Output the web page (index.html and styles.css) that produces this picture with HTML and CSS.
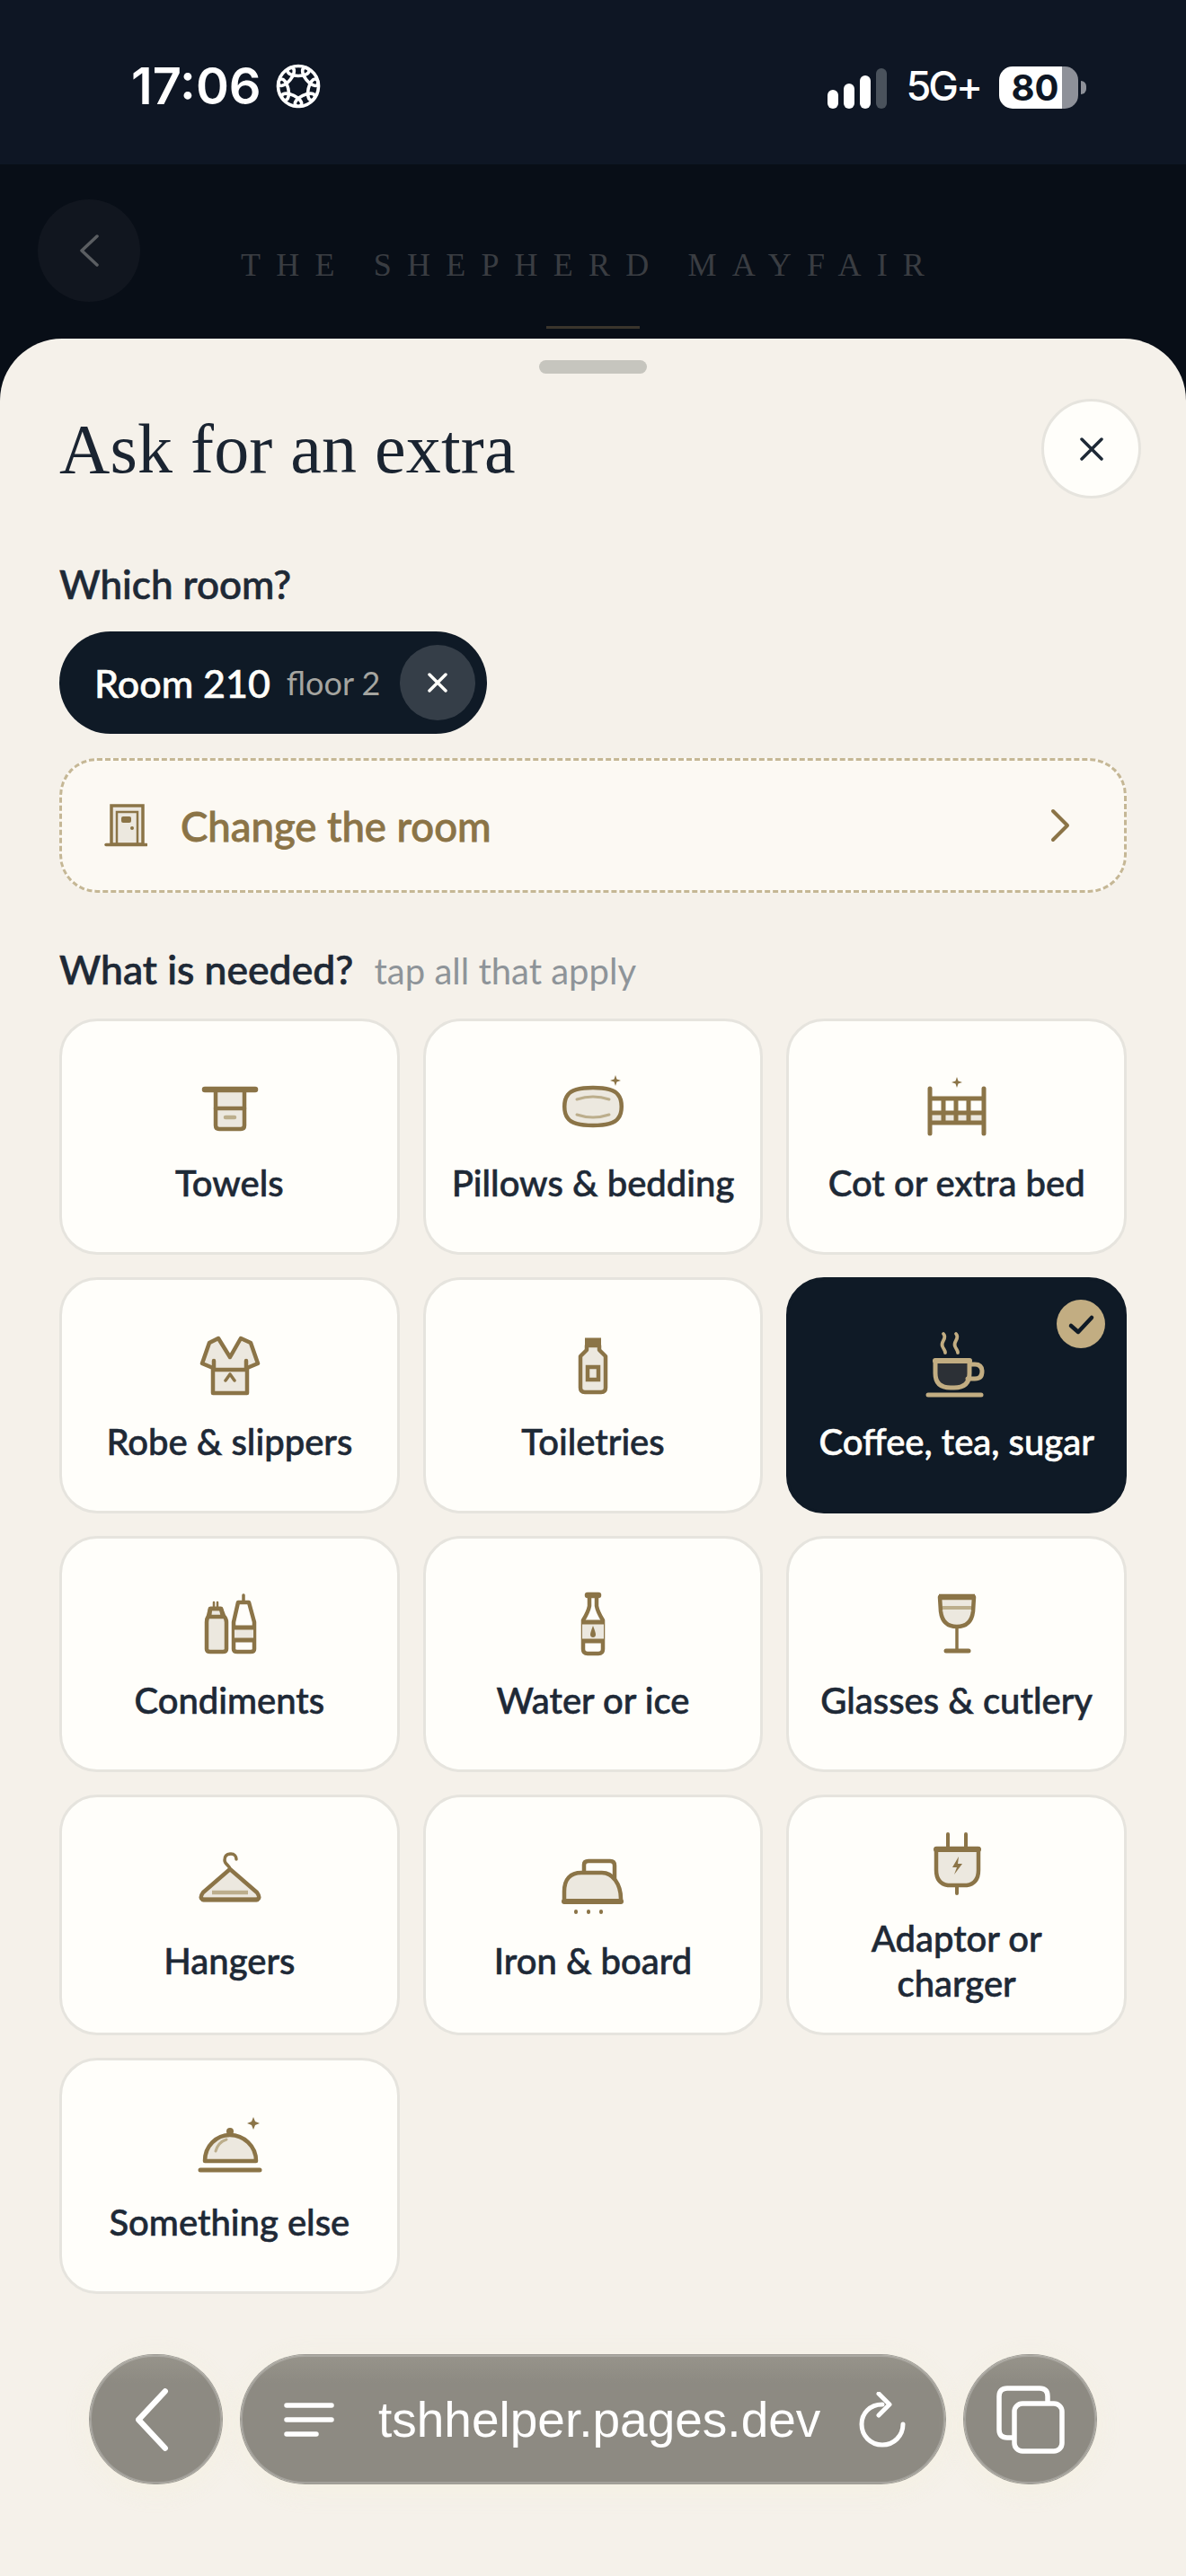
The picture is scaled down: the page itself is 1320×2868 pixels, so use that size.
FILE: index.html
```html
<!DOCTYPE html>
<html lang="en">
  <head>
    <meta charset="UTF-8" />
    <meta name="viewport" content="width=device-width, initial-scale=1.0" />
    <title>Ask for an extra</title>
    <link rel="stylesheet" href="styles.css">
  </head>
  <body>
    <div class="phone">
      <div class="status">
        <div class="status-left">
          <span class="clock">17:06</span>
          <svg class="focus" viewBox="0 0 50 50" fill="none" stroke="#fff" stroke-width="3.600">
            <ellipse cx="25" cy="8" rx="12" ry="5.500"/>
            <ellipse cx="25" cy="8" rx="12" ry="5.500" transform="rotate(51.430 25 25)"/>
            <ellipse cx="25" cy="8" rx="12" ry="5.500" transform="rotate(102.860 25 25)"/>
            <ellipse cx="25" cy="8" rx="12" ry="5.500" transform="rotate(154.290 25 25)"/>
            <ellipse cx="25" cy="8" rx="12" ry="5.500" transform="rotate(205.710 25 25)"/>
            <ellipse cx="25" cy="8" rx="12" ry="5.500" transform="rotate(257.140 25 25)"/>
            <ellipse cx="25" cy="8" rx="12" ry="5.500" transform="rotate(308.570 25 25)"/>
          </svg>
        </div>
        <div class="status-right">
          <div class="signal">
            <i class="bar bar-1"></i>
            <i class="bar bar-2"></i>
            <i class="bar bar-3"></i>
            <i class="bar bar-4"></i>
          </div>
          <span class="net">5G+</span>
          <div class="battery"><span>80</span></div>
          <i class="battery-nub"></i>
        </div>
      </div>

      <header class="topbar">
        <button class="topbar-back">
          <svg viewBox="0 0 24 36" fill="none" stroke="#5b5e62" stroke-width="3.500" stroke-linecap="round" stroke-linejoin="round"><path d="M21 2 L4 18 L21 34"/></svg>
        </button>
        <span class="hotel">THE SHEPHERD MAYFAIR</span>
        <i class="topbar-rule"></i>
      </header>

      <main class="sheet">
        <div class="handle"></div>
        <div class="sheet-head">
          <h1>Ask for an extra</h1>
          <button class="close">
            <svg viewBox="0 0 32 32" fill="none" stroke="#1e2936" stroke-width="3.500" stroke-linecap="round"><path d="M5 5 L27 27 M27 5 L5 27"/></svg>
          </button>
        </div>

        <h2 class="label">Which room?</h2>
        <div class="room-chip">
          <span class="room-name">Room 210</span>
          <span class="room-floor">floor 2</span>
          <span class="room-clear">
            <svg viewBox="0 0 28 28" fill="none" stroke="#fffefa" stroke-width="3.500" stroke-linecap="round"><path d="M5 5 L23 23 M23 5 L5 23"/></svg>
          </span>
        </div>

        <div class="change-room">
          <svg class="door" viewBox="0 0 48 48" fill="none" stroke="#8b7447" stroke-width="3.500">
            <path d="M8 45 V2 H43 V45 Z" fill="#ece8df"/>
            <path d="M14 45 V9 H37 V45" stroke-width="2.500"/>
            <rect x="19" y="14" width="11" height="7" rx="2" fill="#8b7447" stroke="none"/>
            <circle cx="31" cy="27" r="2" fill="#8b7447" stroke="none"/>
            <path d="M2 45.500 H47" stroke-linecap="round"/>
          </svg>
          <span class="change-text">Change the room</span>
          <svg class="chevron" viewBox="0 0 22 38" fill="none" stroke="#8b7447" stroke-width="4" stroke-linecap="round" stroke-linejoin="round"><path d="M3 3 L19 19 L3 35"/></svg>
        </div>

        <h2 class="label label-needed">What is needed? <span class="hint">tap all that apply</span></h2>

        <div class="grid">
          <div class="card">
            <svg class="icon" viewBox="0 0 72 72" fill="none" stroke="#8b7447" stroke-width="4.500" stroke-linecap="round" stroke-linejoin="round">
              <path d="M21 15 V55 Q21 59 25 59 H49 Q53 59 53 55 V15 Z" fill="#ece8df"/>
              <path d="M21 36 H53"/>
              <path d="M32 46 H42" stroke="#bcae8c"/>
              <path d="M9 15 H65" stroke-width="6.500"/>
            </svg>
            <span>Towels</span>
          </div>
          <div class="card">
            <svg class="icon" viewBox="0 0 72 72" fill="none" stroke="#8b7447" stroke-width="4.500" stroke-linecap="round" stroke-linejoin="round">
              <path d="M36 13 C48 13 60 15 64 21 C69 27 69 41 64 47 C60 53 48 55 36 55 C24 55 12 53 8 47 C3 41 3 27 8 21 C12 15 24 13 36 13 Z" fill="#ece8df"/>
              <path d="M18 26 Q36 20 54 26" stroke="#bcae8c" stroke-width="3"/>
              <path d="M18 43 Q36 49 54 43" stroke="#bcae8c" stroke-width="3"/>
              <path d="M61 -1 L62.500 3.500 L67 5 L62.500 6.500 L61 11 L59.500 6.500 L55 5 L59.500 3.500 Z" fill="#8b7447" stroke="none"/>
            </svg>
            <span>Pillows &amp; bedding</span>
          </div>
          <div class="card">
            <svg class="icon" viewBox="0 0 72 72" fill="none" stroke="#8b7447" stroke-width="5" stroke-linecap="round" stroke-linejoin="round">
              <rect x="6" y="42" width="60" height="10" fill="#ece8df" stroke="none"/>
              <path d="M6 14 V64 M66 14 V64"/>
              <path d="M6 25 H66 M6 41 H66 M6 52 H66" stroke-linecap="butt"/>
              <path d="M21 25 V52 M35 25 V52 M49 25 V52" stroke-linecap="butt"/>
              <path d="M36 1 L37.500 5.500 L42 7 L37.500 8.500 L36 13 L34.500 8.500 L30 7 L34.500 5.500 Z" fill="#8b7447" stroke="none"/>
            </svg>
            <span>Cot or extra bed</span>
          </div>

          <div class="card">
            <svg class="icon" viewBox="0 0 72 72" fill="none" stroke="#8b7447" stroke-width="4.500" stroke-linecap="round" stroke-linejoin="round">
              <path d="M24 4 L37 25 L49 4 L60 9 L68 32 L56 37 V65 H18 V37 L6 32 L14 9 Z" fill="#ece8df"/>
              <path d="M19 29 V39 H55 V29"/>
              <path d="M37 44 L32 51 M37 44 L42 51" stroke-width="3.500"/>
            </svg>
            <span>Robe &amp; slippers</span>
          </div>
          <div class="card">
            <svg class="icon" viewBox="0 0 72 72" fill="none" stroke="#8b7447" stroke-width="4.500" stroke-linecap="round" stroke-linejoin="round">
              <path d="M29 12 V17 L22 24 V59 Q22 64 27 64 H45 Q50 64 50 59 V24 L43 17 V12 Z" fill="#ece8df"/>
              <rect x="27" y="3.500" width="18" height="8" fill="#8b7447" stroke="none"/>
              <rect x="30" y="36" width="12" height="14" fill="#ece8df" stroke-linejoin="miter"/>
            </svg>
            <span>Toiletries</span>
          </div>
          <div class="card card-selected">
            <span class="check">
              <svg viewBox="0 0 54 54" fill="none" stroke="#0f1a26" stroke-width="4.500" stroke-linecap="round" stroke-linejoin="round"><path d="M16 29 L24 36 L39 20"/></svg>
            </span>
            <svg class="icon" viewBox="0 0 72 72" fill="none" stroke="#c2ad82" stroke-width="5" stroke-linecap="round" stroke-linejoin="round">
              <path d="M21 -1 C26 4 17 8 20 13 C21 16 23 17 23 20 M35 -1 C40 4 31 8 34 13 C35 16 37 17 37 20" stroke-width="3.800"/>
              <path d="M12 29 H50 V43 Q50 59 33 59 H29 Q12 59 12 43 Z" fill="#2c3036"/>
              <path d="M12 29 H50" stroke-width="6"/>
              <path d="M52 33 H56 Q64 33 64 41 Q64 49 56 49 H48" />
              <path d="M4 67 H63"/>
            </svg>
            <span>Coffee, tea, sugar</span>
          </div>

          <div class="card">
            <svg class="icon" viewBox="0 0 72 72" fill="none" stroke="#8b7447" stroke-width="4.500" stroke-linecap="round" stroke-linejoin="round">
              <path d="M19 10 V16 M23 10 V16" stroke-width="2.500"/>
              <path d="M15 17 H27 L30 25 Q33 28 33 32 V62 Q33 65 29 65 H15 Q11 65 11 62 V32 Q11 28 13 25 Z" fill="#ece8df"/>
              <path d="M15 17 H27 L29 26 H14 Z"/>
              <path d="M52 2 V9" stroke-width="3.500"/>
              <path d="M46 10 H58 L64 32 V62 Q64 65 60 65 H45 Q41 65 41 62 V32 Z"/>
              <rect x="42" y="39" width="21" height="13" fill="#ece8df" stroke="none"/>
              <path d="M41 38 H64 M41 52 H64" stroke-linecap="butt" stroke-width="5"/>
            </svg>
            <span>Condiments</span>
          </div>
          <div class="card">
            <svg class="icon" viewBox="0 0 72 72" fill="none" stroke="#8b7447" stroke-width="4.500" stroke-linecap="round" stroke-linejoin="round">
              <path d="M30 2 H42" stroke-width="6.500"/>
              <path d="M32 4 V14 Q31 20 25 30 V62 Q25 67 30 67 H42 Q47 67 47 62 V30 Q41 20 40 14 V4"/>
              <rect x="24" y="33" width="24" height="20" fill="#ece8df" stroke="none"/>
              <path d="M24 32 H48 M24 53 H48" stroke-linecap="butt" stroke-width="5"/>
              <path d="M36 36 C34 41 33 44 33 46 C33 50 39 50 39 46 C39 44 38 41 36 36 Z" fill="#8b7447" stroke="none"/>
            </svg>
            <span>Water or ice</span>
          </div>
          <div class="card">
            <svg class="icon" viewBox="0 0 72 72" fill="none" stroke="#8b7447" stroke-width="4.500" stroke-linecap="round" stroke-linejoin="round">
              <path d="M17 4 H55 L54 20 Q52 37 36 37 Q20 37 18 20 Z" fill="#ece8df"/>
              <path d="M16 4 H56" stroke-width="6.500" stroke-linecap="butt"/>
              <path d="M20 16 H52" stroke="#bcae8c" stroke-width="4" stroke-linecap="butt"/>
              <path d="M36 37 V64" stroke-width="3.500"/>
              <path d="M24 64 H49" stroke-width="5"/>
            </svg>
            <span>Glasses &amp; cutlery</span>
          </div>

          <div class="card">
            <svg class="icon" viewBox="0 0 72 72" fill="none" stroke="#8b7447" stroke-width="4.500" stroke-linecap="round" stroke-linejoin="round">
              <path d="M37 17 C37 13 31 12 31 7 C31 2 34 0 38 0 C42 0 44 3 44 6" stroke-width="3.500"/>
              <path d="M37 17 L67 43 Q72 50 66 51 H8 Q2 50 7 43 Z" fill="#ece8df"/>
              <path d="M7 51 H67" stroke-width="5"/>
              <path d="M17 43 H57" stroke="#bcae8c" stroke-width="4.500" stroke-linecap="butt"/>
            </svg>
            <span>Hangers</span>
          </div>
          <div class="card">
            <svg class="icon" viewBox="0 0 72 72" fill="none" stroke="#8b7447" stroke-width="4.500" stroke-linecap="round" stroke-linejoin="round">
              <path d="M26 22 V12 Q26 8 31 8 H55 Q60 8 60 13 V28"/>
              <path d="M4 53 V42 C4 28 11 21 23 21 H46 C58 21 67 34 67 50 V53 Z" fill="#ece8df"/>
              <path d="M4 53 H67" stroke-width="6"/>
              <path d="M17 64 V65 M31 64 V65 M45 64 V65" stroke-width="4"/>
            </svg>
            <span>Iron &amp; board</span>
          </div>
          <div class="card">
            <svg class="icon" viewBox="0 0 72 72" fill="none" stroke="#8b7447" stroke-width="4.500" stroke-linecap="round" stroke-linejoin="round">
              <path d="M26 3 V18 M46 3 V18" stroke-width="4"/>
              <path d="M13 19 H60 V43 Q60 58 47 60 H26 Q13 58 13 43 Z" fill="#ece8df"/>
              <path d="M13 20 H60" stroke-width="6"/>
              <path d="M36 60 V69" stroke-width="4"/>
              <path d="M38 28 L31 40 H36 L33 48 L42 36 H37 Z" fill="#8b7447" stroke="none"/>
            </svg>
            <span>Adaptor or<br>charger</span>
          </div>

          <div class="card">
            <svg class="icon" viewBox="0 0 72 72" fill="none" stroke="#8b7447" stroke-width="4.500" stroke-linecap="round" stroke-linejoin="round">
              <path d="M9 51 C9 34 22 22 37 22 C52 22 66 34 66 51 Z" fill="#ece8df"/>
              <circle cx="37" cy="18" r="4" fill="#8b7447" stroke="none"/>
              <path d="M21 40 C23 33 27 29 33 27" stroke="#bcae8c" stroke-width="3"/>
              <path d="M4 61 H70" stroke-width="5"/>
              <path d="M63 2 L65 7 L70 9 L65 11 L63 16 L61 11 L56 9 L61 7 Z" fill="#8b7447" stroke="none"/>
            </svg>
            <span>Something else</span>
          </div>
        </div>
      </main>

      <nav class="browser">
        <button class="glass glass-round">
          <svg class="back-icon" viewBox="0 0 48 72" fill="none" stroke="#fff" stroke-width="6" stroke-linecap="round" stroke-linejoin="round"><path d="M38 6 L10 36 L38 66"/></svg>
        </button>
        <div class="glass url-bar">
          <svg class="menu" viewBox="0 0 56 40" fill="none" stroke="#fff" stroke-width="5.500" stroke-linecap="round"><path d="M3 4 H53 M3 20 H53 M3 36 H36"/></svg>
          <span class="url">tshhelper.pages.dev</span>
          <svg class="reload" viewBox="0 0 52 62" fill="none" stroke="#fff" stroke-width="5" stroke-linecap="round" stroke-linejoin="round">
            <path d="M26 14 C12 14 3 24 3 36 C3 49 13 59 26 59 C39 59 49 49 49 36"/>
            <path d="M22 2 L34 14 L22 26"/>
          </svg>
        </div>
        <button class="glass glass-round">
          <svg viewBox="0 0 76 76" fill="none" stroke="#fff" stroke-width="5.500" stroke-linejoin="round">
            <path d="M18 58 H12 Q3 58 3 49 V12 Q3 3 12 3 H48 Q57 3 57 12 V18"/>
            <rect x="20" y="20" width="53" height="53" rx="9"/>
          </svg>
        </button>
      </nav>
    </div>
  </body>
</html>
```

FILE: styles.css
```css
* {
  box-sizing: border-box;
}

html,
body {
  margin: 0;
  padding: 0;
}

body {
  font-family: "Lato", "Liberation Sans", sans-serif;
  background: #f5f1ea;
  color: #1e2936;
}

button {
  border: none;
  padding: 0;
  background: none;
}

.icon {
  overflow: visible;
}

.phone {
  position: relative;
  width: 1320px;
  height: 2868px;
  overflow: hidden;
  display: flex;
  flex-direction: column;
  background: #080e17;
}

/* status bar */
.status {
  height: 183px;
  flex: none;
  background: #0e1624;
  display: flex;
  justify-content: space-between;
  padding: 71px 111px 0 146px;
  color: #fff;
  font-family: "Inter", "Liberation Sans", sans-serif;
}

.status-left {
  display: flex;
  align-items: center;
  gap: 16px;
  height: 50px;
}

.clock {
  font-size: 56px;
  font-weight: 600;
  line-height: 50px;
  letter-spacing: 0;
}

.focus {
  width: 50px;
  height: 50px;
}

.status-right {
  display: flex;
  align-items: flex-end;
  height: 50px;
}

.signal {
  display: flex;
  align-items: flex-end;
  gap: 6px;
  height: 45px;
}

.bar {
  display: block;
  width: 12px;
  border-radius: 6px;
  background: #fff;
}

.bar-1 { height: 21px; }
.bar-2 { height: 28px; }
.bar-3 { height: 37px; }
.bar-4 { height: 45px; background: #4a525c; }

.net {
  font-size: 45px;
  font-weight: 500;
  line-height: 50px;
  margin: 0 21px 0 22px;
  letter-spacing: -3px;
  align-self: center;
}

.battery {
  width: 88px;
  height: 47px;
  border-radius: 15px;
  background: linear-gradient(90deg, #fff 80%, #8e9199 80%);
  color: #0e1624;
  font-size: 40px;
  font-weight: 700;
  line-height: 47px;
  text-align: center;
}

.battery span {
  margin-left: -8px;
}

.battery-nub {
  display: block;
  width: 6px;
  height: 15px;
  margin: 0 0 16px 3px;
  border-radius: 0 8px 8px 0;
  background: #8e9199;
}

/* dimmed page behind the sheet */
.topbar {
  position: relative;
  height: 194px;
  flex: none;
  display: flex;
  align-items: flex-start;
  padding: 39px 0 0 42px;
}

.topbar-back {
  width: 114px;
  height: 114px;
  border-radius: 50%;
  background: #11161f;
  display: flex;
  align-items: center;
  justify-content: center;
}

.topbar-back svg {
  width: 24px;
  height: 36px;
}

.hotel {
  position: absolute;
  left: 268px;
  top: 92px;
  font-family: "Liberation Serif", serif;
  font-size: 36px;
  line-height: 40px;
  letter-spacing: 17.200px;
  color: #3a3d42;
  white-space: nowrap;
}

.topbar-rule {
  position: absolute;
  left: 608px;
  top: 180px;
  width: 104px;
  height: 3px;
  background: #3a352c;
}

/* sheet */
.sheet {
  flex: 1;
  background: #f5f1ea;
  border-radius: 69px 69px 0 0;
  padding: 24px 66px 0;
}

.handle {
  width: 120px;
  height: 15px;
  margin: 0 auto;
  border-radius: 8px;
  background: #c6c5be;
}

.sheet-head {
  display: flex;
  justify-content: space-between;
  align-items: center;
  margin: 28px -16px 0 0;
}

h1 {
  margin: 0;
  font-family: "Liberation Serif", serif;
  font-weight: 400;
  font-size: 78px;
  line-height: 111px;
  letter-spacing: 0.2px;
  color: #1a2431;
}

.close {
  width: 111px;
  height: 111px;
  border-radius: 50%;
  background: #fffefa;
  border: 3px solid #e6e4de;
  display: flex;
  align-items: center;
  justify-content: center;
}

.close svg {
  width: 32px;
  height: 32px;
}

.label {
  margin: 70px 0 0;
  font-size: 44px;
  font-weight: 500;
  -webkit-text-stroke: 0.7px currentColor;
  line-height: 50px;
  color: #1e2936;
}

.room-chip {
  display: inline-flex;
  align-items: center;
  height: 114px;
  margin-top: 28px;
  padding: 0 13px 0 39px;
  border-radius: 57px;
  background: #0f1a26;
  color: #fffefa;
}

.room-name {
  font-size: 43px;
  font-weight: 500;
  -webkit-text-stroke: 0.6px currentColor;
}

.room-floor {
  margin-left: 18px;
  font-size: 36px;
  color: #a5a5a0;
}

.room-clear {
  width: 84px;
  height: 84px;
  margin-left: 22px;
  border-radius: 50%;
  background: #353e48;
  display: flex;
  align-items: center;
  justify-content: center;
}

.room-clear svg {
  width: 28px;
  height: 28px;
}

.change-room {
  display: flex;
  align-items: center;
  height: 150px;
  margin-top: 27px;
  padding: 0 60px 0 47px;
  border: 3px dashed #c5b795;
  border-radius: 42px;
  background: #fcf9f3;
  color: #8b7447;
}

.door {
  width: 48px;
  height: 48px;
  flex: none;
}

.change-text {
  flex: 1;
  margin-left: 37px;
  font-size: 45.500px;
  font-weight: 500;
  -webkit-text-stroke: 0.8px currentColor;
}

.chevron {
  width: 22px;
  height: 38px;
}

.label-needed {
  margin-top: 60px;
  font-size: 44.500px;
}

.hint {
  margin-left: 12px;
  font-size: 40px;
  font-weight: 400;
  -webkit-text-stroke: 0;
  color: #8e9499;
}

.grid {
  display: grid;
  grid-template-columns: repeat(3, 1fr);
  gap: 25px 26px;
  margin-top: 28px;
}

.card {
  position: relative;
  min-height: 263px;
  display: flex;
  flex-direction: column;
  align-items: center;
  justify-content: center;
  padding: 38px 12px 30px;
  border: 3px solid #e6e4de;
  border-radius: 42px;
  background: #fffefa;
  font-size: 40px;
  font-weight: 500;
  -webkit-text-stroke: 0.6px currentColor;
  line-height: 50px;
  text-align: center;
  color: #1e2936;
}

.icon {
  width: 72px;
  height: 72px;
  flex: none;
  margin-bottom: 22px;
}

.card-selected {
  background: #0f1a26;
  border-color: #0f1a26;
  color: #fffefa;
}

.check {
  position: absolute;
  top: 22px;
  right: 21px;
  width: 54px;
  height: 54px;
  border-radius: 50%;
  background: #c2ad82;
  display: flex;
  align-items: center;
  justify-content: center;
}

.check svg {
  width: 54px;
  height: 54px;
}

/* browser chrome, floats over the page */
.browser {
  position: absolute;
  left: 100px;
  right: 100px;
  top: 2622px;
  height: 143px;
  display: flex;
  gap: 21px;
}

.glass {
  height: 143px;
  border-radius: 72px;
  background: linear-gradient(180deg, #97948b 0%, #8d8a82 22%, #8d8a82 100%);
  box-shadow: inset 0 0 0 2px rgba(255, 255, 255, 0.2), 0 0 0 1px rgba(70, 70, 65, 0.5), 0 6px 30px rgba(245, 240, 220, 0.6);
  display: flex;
  align-items: center;
  justify-content: center;
}

.glass-round {
  width: 147px;
  flex: none;
}

.glass-round svg {
  width: 76px;
  height: 76px;
}

.glass-round .back-icon {
  margin-right: 10px;
}

.url-bar {
  flex: 1;
  padding: 0 44px 0 48px;
  justify-content: space-between;
}

.menu {
  width: 56px;
  height: 40px;
  flex: none;
}

.url {
  flex: 1;
  margin-left: 49px;
  font-family: "Liberation Sans", sans-serif;
  font-size: 55px;
  line-height: 60px;
  color: #fff;
}

.reload {
  width: 52px;
  height: 62px;
  flex: none;
}
```
